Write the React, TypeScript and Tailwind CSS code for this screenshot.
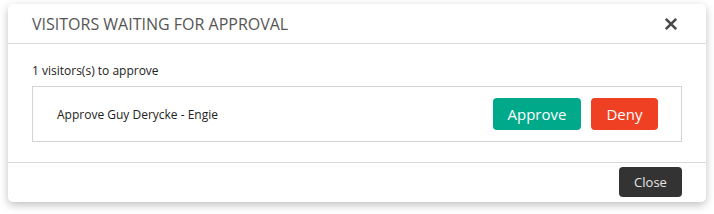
import React from "react";

export default function App() {
  return (
    <div className="w-[714px] h-[214px] bg-white pt-[4px] pl-[8px]" style={{ fontFamily: '"Open Sans", sans-serif' }}>
      <div className="w-[698px] bg-white rounded-[5px] shadow-[0_3px_8px_rgba(0,0,0,0.25)]">
        <div className="h-[40px] flex items-center justify-between pl-[24px] pr-[28px] border-b border-[#d9d9d9]">
          <span className="text-[16px] text-[#555555]">VISITORS WAITING FOR APPROVAL</span>
          <svg width="14" height="14" viewBox="0 0 14 14" className="mt-[1px]">
            <path d="M1.8 1.8 L12.2 12.2 M12.2 1.8 L1.8 12.2" stroke="#4a4a4a" strokeWidth="2.6" strokeLinecap="butt" />
          </svg>
        </div>
        <div className="px-[24px] pt-[17px] pb-[20px] border-b border-[#d9d9d9]">
          <div className="text-[12px] leading-[20px] text-[#222222]">1 visitors(s) to approve</div>
          <div className="mt-[5px] h-[56px] border border-[#d4d4d4] flex items-center justify-between pl-[24px] pr-[23px]">
            <span className="text-[12px] text-[#222222] mt-[2px]">Approve Guy Derycke - Engie</span>
            <div className="flex gap-[10px]">
              <button className="w-[88px] h-[32px] rounded-[4px] bg-[#00a98a] text-white text-[15px] leading-none">Approve</button>
              <button className="w-[67px] h-[32px] rounded-[4px] bg-[#ef4023] text-white text-[15px] leading-none">Deny</button>
            </div>
          </div>
        </div>
        <div className="h-[39px] flex items-start justify-end pr-[24px] pt-[4px]">
          <button className="w-[63px] h-[30px] rounded-[4px] bg-[#333333] text-[#e6e6e6] text-[13px] leading-none">Close</button>
        </div>
      </div>
    </div>
  );
}
